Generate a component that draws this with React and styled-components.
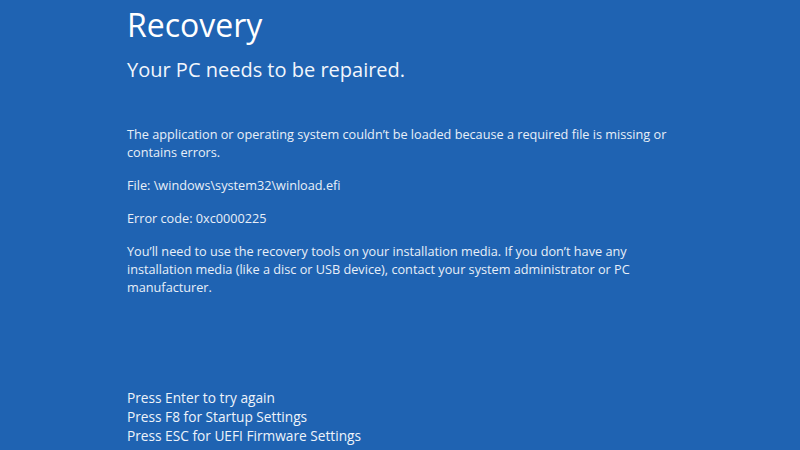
import React from 'react';
import styled, { createGlobalStyle } from 'styled-components';

const GlobalStyle = createGlobalStyle`
html, body {
    margin: 0;
    padding: 0;
    background: #1f63b2;
}
`

const Screen = styled.main`
display: flex;
flex-direction: column;
box-sizing: border-box;
width: 800px;
height: 450px;
padding: 3px 0 5px 127px;
background: #1f63b2;
color: #e8eff8;
font-family: "Open Sans", "Noto Sans", sans-serif;
overflow: hidden;
`

const Title = styled.h1`
margin: 0;
font-size: 32px;
font-weight: 400;
line-height: 44px;
color: #ffffff;
`

const Subtitle = styled.h2`
margin: 9px 0 0;
font-size: 20px;
font-weight: 400;
line-height: 28px;
color: #f2f6fc;
`

const Message = styled.section`
display: flex;
flex-direction: column;
gap: 15px;
margin-top: 41px;
max-width: 560px;
`

const Paragraph = styled.p`
margin: 0;
font-size: 12.7px;
line-height: 18px;
`

const Actions = styled.ul`
list-style: none;
margin: auto 0 0;
padding: 0;
font-size: 13.7px;
line-height: 19px;
color: #eef3fa;
`

const Action = styled.li`
margin: 0;
`

const actions = [
    'Press Enter to try again',
    'Press F8 for Startup Settings',
    'Press ESC for UEFI Firmware Settings',
]

export default function App() {
    return (
        <>
            <GlobalStyle />
            <Screen>
                <Title>Recovery</Title>
                <Subtitle>Your PC needs to be repaired.</Subtitle>
                <Message>
                    <Paragraph>
                        The application or operating system couldn’t be loaded because a required file is missing or contains errors.
                    </Paragraph>
                    <Paragraph>File: \windows\system32\winload.efi</Paragraph>
                    <Paragraph>Error code: 0xc0000225</Paragraph>
                    <Paragraph>
                        You’ll need to use the recovery tools on your installation media. If you don’t have any installation media (like a disc or USB device), contact your system administrator or PC manufacturer.
                    </Paragraph>
                </Message>
                <Actions>
                    {actions.map(label => <Action key={label}>{label}</Action>)}
                </Actions>
            </Screen>
        </>
    )
}
